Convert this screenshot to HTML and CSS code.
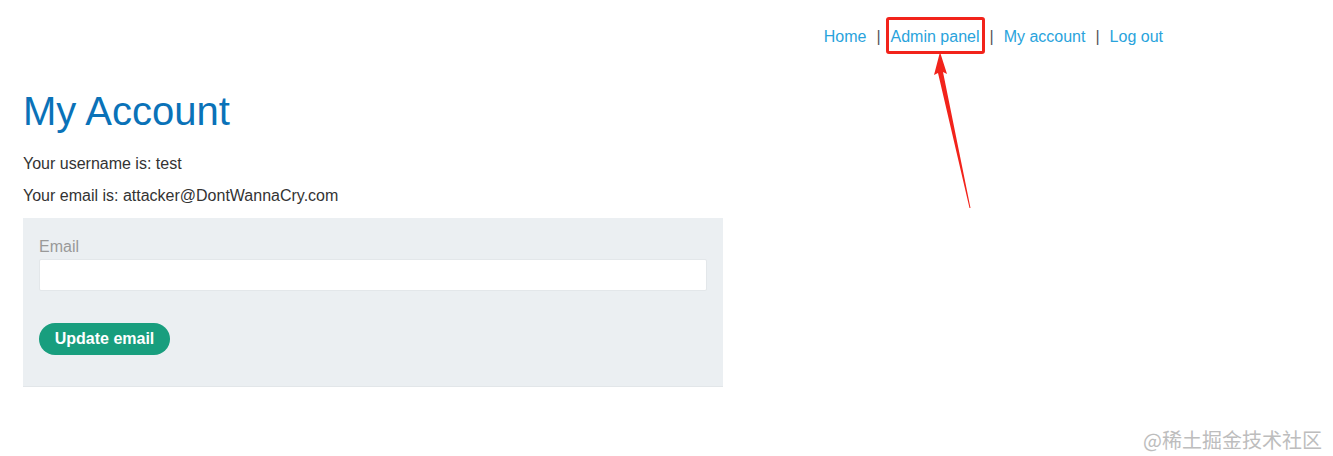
FILE: index.html
```html
<!DOCTYPE html>
<html lang="en">
<head>
<meta charset="utf-8">
<title>My Account</title>
<link rel="stylesheet" href="styles.css">
</head>
<body>
<div class="page">
  <header class="top">
    <nav class="nav">
      <a href="#">Home</a><span class="sep">|</span>
      <a href="#" class="admin">Admin panel</a><span class="sep">|</span>
      <a href="#">My account</a><span class="sep">|</span>
      <a href="#">Log out</a>
    </nav>
  </header>
  <main class="content">
    <h1 class="title">My Account</h1>
    <p class="info">Your username is: test</p>
    <p class="info">Your email is: attacker@DontWannaCry.com</p>
    <form class="form">
      <label class="label" for="email">Email</label>
      <input class="input" id="email" type="email">
      <button class="btn" type="button">Update email</button>
    </form>
  </main>
</div>
<div class="mark-box"></div>
<svg class="arrow" width="60" height="170" viewBox="0 0 60 170">
  <polygon points="39.5,158 40.5,158 13,22 17,24 10,2 4,25 8,23" fill="#f2231b"/>
</svg>
<div class="watermark">@稀土掘金技术社区</div>
</body>
</html>
```
FILE: styles.css
```css
html, body {
  margin: 0;
  padding: 0;
  background: #fff;
}
body {
  font-family: "Liberation Sans", Arial, sans-serif;
  color: #333;
  font-size: 16px;
  width: 1333px;
  height: 456px;
  overflow: hidden;
  position: relative;
}
.page {
  width: 1140px;
  padding-left: 23px;
}
.top {
  display: flex;
  justify-content: flex-end;
  padding-top: 27px;
  height: 20px;
}
.nav {
  display: flex;
  align-items: center;
  line-height: 18px;
}
.nav a {
  color: #29a3dc;
  text-decoration: none;
}
.sep {
  color: #555;
  margin: 0 10px;
}
.content {
  padding-top: 41px;
}
.title {
  margin: 0;
  font-size: 40px;
  font-weight: normal;
  color: #0a72b8;
  line-height: 46px;
}
.info {
  margin: 0;
  line-height: 18px;
}
.title + .info {
  margin-top: 21px;
}
.info + .info {
  margin-top: 14px;
}
.form {
  margin-top: 13px;
  width: 668px;
  background: #ebeff2;
  padding: 20px 16px 31px 16px;
  display: flex;
  flex-direction: column;
  align-items: flex-start;
  border-bottom: 1px solid #e2e6e9;
}
.label {
  color: #999;
  line-height: 18px;
}
.input {
  margin-top: 3px;
  width: 668px;
  height: 32px;
  box-sizing: border-box;
  border: 1px solid #e3e7ea;
  background: #fff;
  border-radius: 2px;
  padding: 0 8px;
}
.btn {
  margin-top: 32px;
  height: 32px;
  width: 131px;
  border: none;
  border-radius: 16px;
  background: #189e7e;
  color: #fff;
  font-family: "Liberation Sans", Arial, sans-serif;
  font-weight: bold;
  font-size: 16px;
  padding: 0;
}
.mark-box {
  position: absolute;
  left: 886px;
  top: 17px;
  width: 93px;
  height: 31px;
  border: 3px solid #f2231b;
  border-radius: 3px;
}
.arrow {
  position: absolute;
  left: 930px;
  top: 50px;
}
.watermark {
  position: absolute;
  left: 1143px;
  top: 429px;
  font-family: "Noto Sans CJK SC", "Liberation Sans", sans-serif;
  font-size: 20px;
  color: #bdbdbd;
  line-height: 22px;
}
```
